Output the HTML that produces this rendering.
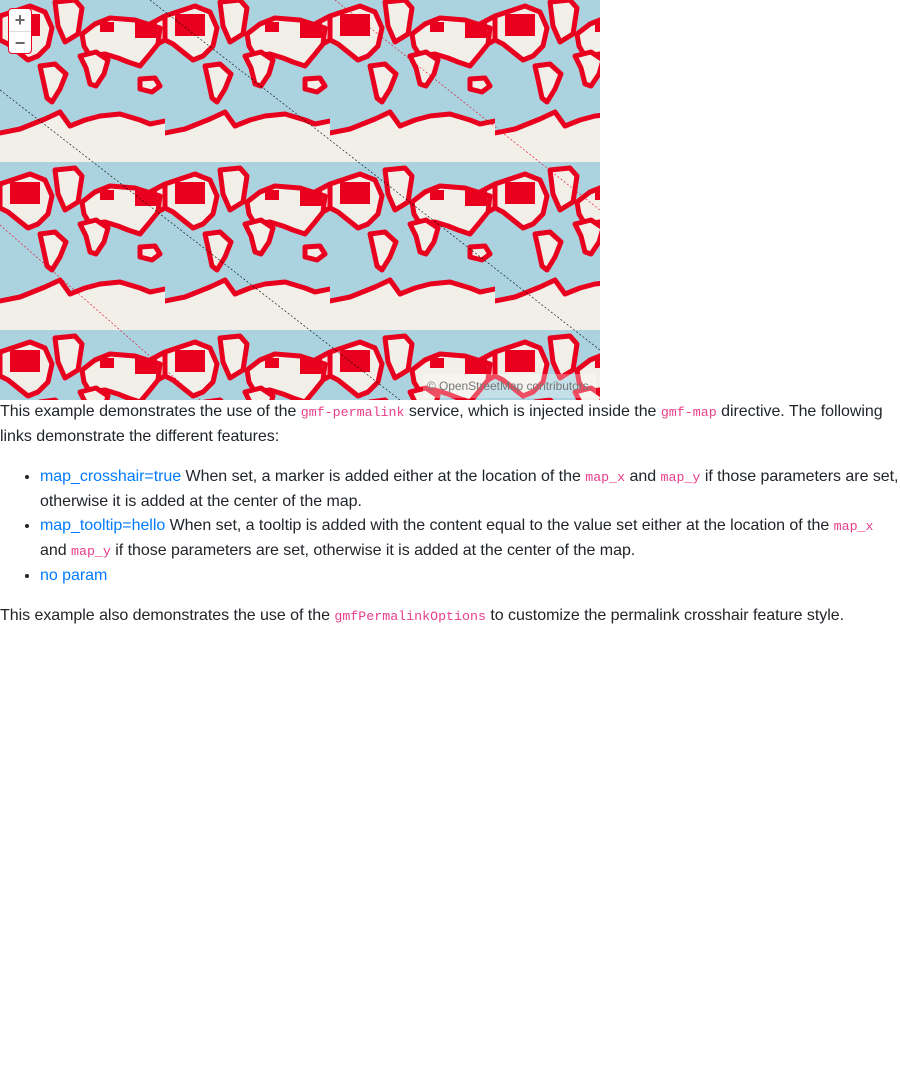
<!DOCTYPE html>
<html><head><meta charset="utf-8"><style>
body{margin:0;font-family:"Liberation Sans",sans-serif;font-size:16px;line-height:24px;color:#212529;background:#fff;letter-spacing:-0.04px}
#map{position:relative;width:600px;height:400px;overflow:hidden;background:#aad3df}
.zoom{position:absolute;left:8px;top:8px;width:22px;height:44px;background:#fff;border:1px solid #e8001e;border-radius:4px}
.zoom div{height:22px;text-align:center;font-size:18px;line-height:22px;color:#666;font-weight:bold}
.zoom div+div{border-top:1px solid #ddd}
.attr{position:absolute;right:4px;bottom:2px;font-size:12px;color:#777;background:rgba(255,255,255,.3);padding:0 4px}
p{margin:0 0 16px}
ul{margin:0 0 16px;padding-left:40px}
a{color:#007bff;text-decoration:none}
code{font-family:"Liberation Mono",monospace;font-size:13.3px;color:#e83e8c;letter-spacing:0}
</style></head><body>
<div id="map">
<svg width="600" height="400" style="position:absolute;left:0;top:0">
<defs>
<pattern id="w" width="165" height="168" patternUnits="userSpaceOnUse" x="0" y="-6">
<rect width="165" height="168" fill="#aad3df"/>
<g fill="#f2efe9" stroke="#e8001e" stroke-width="5" stroke-linejoin="round">
<path d="M55 8 L75 6 L82 14 L78 40 L65 48 L58 32 Z"/>
<path d="M0 22 L30 12 L45 18 L52 34 L48 52 L38 62 L28 66 L18 58 L8 50 L0 46 Z"/>
<path d="M165 22 L150 30 L140 44 L150 54 L165 46 Z"/>
<path d="M40 72 L55 70 L66 80 L60 95 L52 108 L47 104 L44 90 Z"/>
<path d="M82 40 L95 30 L110 24 L135 26 L160 34 L158 50 L150 60 L140 72 L128 68 L118 64 L105 60 L90 62 L84 52 Z"/>
<path d="M80 62 L96 58 L108 66 L104 80 L96 92 L90 90 L86 74 Z"/>
<path d="M140 85 L155 84 L160 92 L152 98 L140 95 Z"/>
<path d="M-5 140 L20 135 L45 125 L60 118 L70 132 L85 126 L100 122 L120 120 L140 126 L150 130 L170 126 L170 172 L-5 172 Z"/>
</g>
<g fill="#e8001e">
<rect x="10" y="20" width="30" height="22"/>
<rect x="135" y="28" width="22" height="16"/>
<rect x="100" y="28" width="14" height="10"/>
</g>
</pattern>
</defs>
<rect width="600" height="400" fill="url(#w)"/>
<line x1="150" y1="0" x2="600" y2="350" stroke="#000" stroke-width=".6" stroke-dasharray="2 2"/>
<line x1="335" y1="0" x2="600" y2="210" stroke="#e8001e" stroke-width=".6" stroke-dasharray="2 2"/>
<line x1="0" y1="90" x2="400" y2="400" stroke="#000" stroke-width=".6" stroke-dasharray="2 2"/>
<line x1="0" y1="225" x2="200" y2="400" stroke="#e8001e" stroke-width=".6" stroke-dasharray="2 2"/>
</svg>
<div class="zoom"><div>+</div><div>−</div></div>
<div class="attr">© OpenStreetMap contributors.</div>
</div>
<p>This example demonstrates the use of the <code>gmf-permalink</code> service, which is injected inside the <code>gmf-map</code> directive. The following links demonstrate the different features:</p>
<ul>
<li><a href="#">map_crosshair=true</a> When set, a marker is added either at the location of the <code>map_x</code> and <code>map_y</code> if those parameters are set, otherwise it is added at the center of the map.</li>
<li><a href="#">map_tooltip=hello</a> When set, a tooltip is added with the content equal to the value set either at the location of the <code>map_x</code> and <code>map_y</code> if those parameters are set, otherwise it is added at the center of the map.</li>
<li><a href="#">no param</a></li>
</ul>
<p>This example also demonstrates the use of the <code>gmfPermalinkOptions</code> to customize the permalink crosshair feature style.</p>
</body></html>
